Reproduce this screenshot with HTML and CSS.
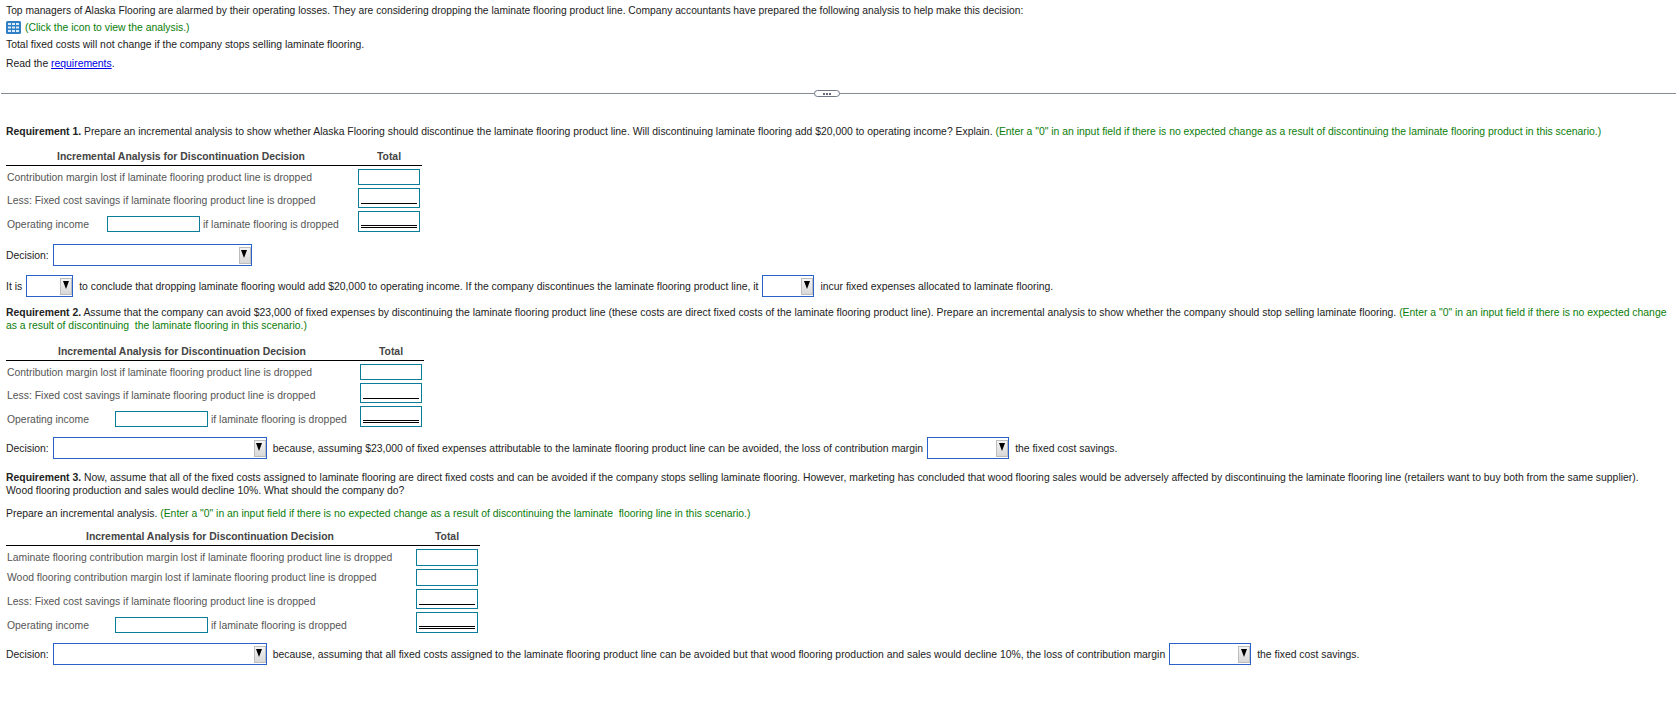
FILE: index.html
```html
<!DOCTYPE html>
<html lang="en">
<head>
<meta charset="utf-8">
<title>Alaska Flooring</title>
<link rel="stylesheet" href="styles.css">
</head>
<body>
<section class="intro">
  <p class="line first">Top managers of Alaska Flooring are alarmed by their operating losses. They are considering dropping the laminate flooring product line. Company accountants have prepared the following analysis to help make this decision:</p>
  <p class="line hint-line"><svg class="grid-icon" width="15" height="13" viewBox="0 0 15 13"><rect width="15" height="13" rx="1.5" fill="#2f7fc4"/><g fill="#dcecf8"><rect x="2" y="2" width="3" height="2"/><rect x="6" y="2" width="3" height="2"/><rect x="10" y="2" width="3" height="2"/><rect x="2" y="5.5" width="3" height="2"/><rect x="6" y="5.5" width="3" height="2"/><rect x="10" y="5.5" width="3" height="2"/><rect x="2" y="9" width="3" height="2"/><rect x="6" y="9" width="3" height="2"/><rect x="10" y="9" width="3" height="2"/></g></svg><span class="green">(Click the icon to view the analysis.)</span></p>
  <p class="line">Total fixed costs will not change if the company stops selling laminate flooring.</p>
  <p class="line read">Read the <a href="#">requirements</a>.</p>
</section>

<div class="divider"><span class="pill"><i></i><i></i><i></i></span></div>

<p class="para req1"><b>Requirement 1.</b> Prepare an incremental analysis to show whether Alaska Flooring should discontinue the laminate flooring product line. Will discontinuing laminate flooring add $20,000 to operating income? Explain. <span class="green">(Enter a "0" in an input field if there is no expected change as a result of discontinuing the laminate flooring product in this scenario.)</span></p>

<table class="sheet sheet-a">
  <thead><tr><th class="title">Incremental Analysis for Discontinuation Decision</th><th class="total">Total</th></tr></thead>
  <tbody>
    <tr><td class="label">Contribution margin lost if laminate flooring product line is dropped</td><td class="amount"><span class="box"></span></td></tr>
    <tr><td class="label">Less: Fixed cost savings if laminate flooring product line is dropped</td><td class="amount"><span class="box single"></span></td></tr>
    <tr><td class="label"><span class="op"><span class="op-name narrow">Operating income</span><span class="box wide"></span><span>if laminate flooring is dropped</span></span></td><td class="amount"><span class="box double"></span></td></tr>
  </tbody>
</table>

<div class="answer dec-a"><span>Decision:</span><span class="select w199"><span class="arrow"></span></span></div>

<div class="answer sentence"><span>It is</span><span class="select w47"><span class="arrow"></span></span><span>to conclude that dropping laminate flooring would add $20,000 to operating income. If the company discontinues the laminate flooring product line, it</span><span class="select w52"><span class="arrow"></span></span><span>incur fixed expenses allocated to laminate flooring.</span></div>

<p class="para req2"><b>Requirement 2.</b> Assume that the company can avoid $23,000 of fixed expenses by discontinuing the laminate flooring product line (these costs are direct fixed costs of the laminate flooring product line). Prepare an incremental analysis to show whether the company should stop selling laminate flooring. <span class="green">(Enter a "0" in an input field if there is no expected change<br>as a result of discontinuing&nbsp; the laminate flooring in this scenario.)</span></p>

<table class="sheet sheet-b">
  <thead><tr><th class="title">Incremental Analysis for Discontinuation Decision</th><th class="total">Total</th></tr></thead>
  <tbody>
    <tr><td class="label">Contribution margin lost if laminate flooring product line is dropped</td><td class="amount"><span class="box"></span></td></tr>
    <tr><td class="label">Less: Fixed cost savings if laminate flooring product line is dropped</td><td class="amount"><span class="box single"></span></td></tr>
    <tr><td class="label"><span class="op"><span class="op-name">Operating income</span><span class="box wide"></span><span>if laminate flooring is dropped</span></span></td><td class="amount"><span class="box double"></span></td></tr>
  </tbody>
</table>

<div class="answer dec-b"><span>Decision:</span><span class="select w214"><span class="arrow"></span></span><span>because, assuming $23,000 of fixed expenses attributable to the laminate flooring product line can be avoided, the loss of contribution margin</span><span class="select w82"><span class="arrow"></span></span><span>the fixed cost savings.</span></div>

<p class="para req3"><b>Requirement 3.</b> Now, assume that all of the fixed costs assigned to laminate flooring are direct fixed costs and can be avoided if the company stops selling laminate flooring. However, marketing has concluded that wood flooring sales would be adversely affected by discontinuing the laminate flooring line (retailers want to buy both from the same supplier).<br>Wood flooring production and sales would decline 10%. What should the company do?</p>
<p class="para prep">Prepare an incremental analysis. <span class="green">(Enter a "0" in an input field if there is no expected change as a result of discontinuing the laminate&nbsp; flooring line in this scenario.)</span></p>

<table class="sheet sheet-c">
  <thead><tr><th class="title">Incremental Analysis for Discontinuation Decision</th><th class="total">Total</th></tr></thead>
  <tbody>
    <tr><td class="label">Laminate flooring contribution margin lost if laminate flooring product line is dropped</td><td class="amount"><span class="box tall"></span></td></tr>
    <tr><td class="label">Wood flooring contribution margin lost if laminate flooring product line is dropped</td><td class="amount"><span class="box tall"></span></td></tr>
    <tr><td class="label">Less: Fixed cost savings if laminate flooring product line is dropped</td><td class="amount"><span class="box single"></span></td></tr>
    <tr><td class="label"><span class="op"><span class="op-name">Operating income</span><span class="box wide"></span><span>if laminate flooring is dropped</span></span></td><td class="amount"><span class="box double"></span></td></tr>
  </tbody>
</table>

<div class="answer dec-c"><span>Decision:</span><span class="select w214"><span class="arrow"></span></span><span>because, assuming that all fixed costs assigned to the laminate flooring product line can be avoided but that wood flooring production and sales would decline 10%, the loss of contribution margin</span><span class="select w82"><span class="arrow"></span></span><span>the fixed cost savings.</span></div>
</body>
</html>
```

FILE: styles.css
```css
html, body { margin: 0; padding: 0; background: #fff; }
body {
  font-family: "Liberation Sans", Arial, sans-serif;
  font-size: 10.4px;
  line-height: 13px;
  color: #222;
  padding: 4px 6px 0 6px;
  overflow: hidden;
  height: 722px;
  box-sizing: border-box;
}
p { margin: 0; }
.green { color: #0a7d0a; }
a { color: #0000e6; text-decoration: underline; }

.intro .line { margin-bottom: 4px; }
.intro .first { font-size: 10.27px; }
.hint-line { display: flex; align-items: center; gap: 4px; height: 13px; }
.grid-icon { display: block; flex: none; }
.read { margin-top: 6px; }

.divider {
  position: relative;
  height: 1px;
  margin: 23px -6px 0 -5px;
  background: #868c96;
}
.pill {
  position: absolute;
  left: 813px;
  top: -3px;
  width: 26px;
  height: 7px;
  box-sizing: border-box;
  border: 1px solid #6f7885;
  border-radius: 4px;
  background: #fff;
  display: flex;
  align-items: center;
  justify-content: center;
  gap: 1px;
}
.pill i { width: 2px; height: 2px; background: #5f6875; display: block; }

.para { color: #222; }
.req1 { margin-top: 31px; }
.req2 { margin-top: 9px; }
.req3 { margin-top: 12px; }
.prep { margin-top: 10px; }

.sheet { border-collapse: collapse; table-layout: fixed; color: #555; }
.sheet th, .sheet td { padding: 0; }
.sheet th {
  font-weight: bold;
  color: #444;
  height: 14px;
  border-bottom: 1px solid #000;
  padding-bottom: 2px;
  text-align: center;
  vertical-align: bottom;
}
.sheet-a { width: 416px; margin-top: 11px; }
.sheet-a .title { width: 350px; }
.sheet-a .total { width: 66px; }
.sheet-b { width: 418px; margin-top: 12px; }
.sheet-b .title { width: 352px; }
.sheet-b .total { width: 66px; }
.sheet-c { width: 474px; margin-top: 9px; }
.sheet-c .title { width: 408px; }
.sheet-c .total { width: 66px; }

.label { padding-left: 1px !important; white-space: nowrap; vertical-align: middle; }
.amount { padding: 2px 2px 1px 0 !important; vertical-align: top; text-align: right; }
.sheet tbody tr:first-child .amount { padding-top: 3px !important; }
.sheet tbody tr:first-child .label { padding-top: 2px !important; }
.sheet tbody tr:nth-last-child(2) .label { padding-top: 5px !important; }
.box {
  display: block;
  box-sizing: border-box;
  width: 62px;
  height: 16px;
  margin-left: auto;
  border: 1px solid #0b7d99;
  background: #fff;
  position: relative;
}
.box.tall { height: 17px; }
.box.single { height: 20px; }
.box.double { height: 21px; }
.box.single::after, .box.double::after {
  content: "";
  position: absolute;
  left: 2px;
  right: 2px;
  border-bottom: 1px solid #000;
}
.box.single::after { bottom: 3px; }
.box.double::after { bottom: 3px; border-top: 1px solid #000; height: 1px; }
.box.wide { width: 93px; margin: 0; flex: none; }
.op { display: flex; align-items: flex-end; gap: 3px; height: 16px; line-height: 14px; }
.op-name { width: 108px; margin-right: -3px; flex: none; }
.op-name.narrow { width: 100px; }
.sheet tbody tr:last-child .label { vertical-align: bottom; padding-bottom: 1px; }

.answer { display: flex; align-items: center; gap: 4px; white-space: nowrap; color: #222; }
.dec-a { margin-top: 11px; }
.dec-b { margin-top: 9px; }
.dec-c { margin-top: 9px; }
.sentence { margin-top: 9px; }
.select {
  display: flex;
  justify-content: flex-end;
  align-items: center;
  box-sizing: border-box;
  height: 22px;
  margin-right: 2px;
  border: 1px solid #2b62c9;
  background: #fff;
  flex: none;
}
.w199 { width: 199px; }
.w214 { width: 214px; }
.w47 { width: 47px; }
.w52 { width: 52px; }
.w82 { width: 82px; }
.arrow {
  width: 12px;
  height: 17px;
  box-sizing: border-box;
  background: linear-gradient(#f4f4f4, #d8d8d8);
  border: 1px solid #bdbdbd;
  position: relative;
}
.arrow::after {
  content: "";
  position: absolute;
  left: 1.5px;
  top: 2px;
  border-left: 3.5px solid transparent;
  border-right: 3.5px solid transparent;
  border-top: 8px solid #000;
}
```
